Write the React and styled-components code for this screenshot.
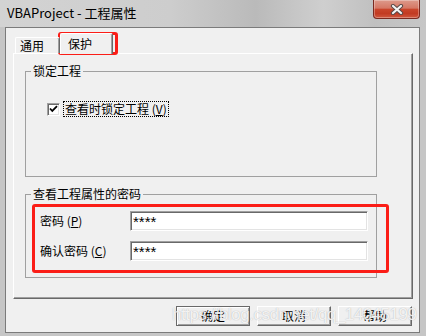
import styled, { createGlobalStyle } from 'styled-components'

const uiFont = `"Noto Sans CJK SC", "Liberation Sans", sans-serif`

const GlobalStyle = createGlobalStyle`
  html, body {
    margin: 0;
    padding: 0;
    background: #f0f0f0;
  }
  body {
    font-family: ${uiFont};
    font-size: 12px;
    color: #000;
  }
`

const Window = styled.div`
  position: relative;
  width: 426px;
  height: 336px;
  display: flex;
  flex-direction: column;
  background: #c6c6c6;
  overflow: hidden;
`

const TitleBar = styled.div`
  flex: none;
  height: 27px;
  display: flex;
  align-items: center;
  padding-left: 7px;
  background: linear-gradient(
    to right,
    #d3d3d3 0%,
    #cdcdcd 40%,
    #bababa 60%,
    #cfcfcf 76%,
    #c0c0c0 88%,
    #c6c6c6 100%
  );
`

const TitleText = styled.span`
  font-size: 13px;
  line-height: 16px;
  padding-bottom: 1px;
`

const CloseButton = styled.div`
  align-self: flex-start;
  margin-left: auto;
  margin-right: 6px;
  box-sizing: border-box;
  width: 47px;
  height: 19px;
  display: flex;
  align-items: center;
  justify-content: center;
  border: 1px solid #7a2a20;
  border-top: none;
  border-radius: 0 0 4px 4px;
  background: linear-gradient(
    #dd9a8b 0%,
    #d57865 45%,
    #c9452b 52%,
    #c23b22 75%,
    #d0593f 100%
  );
  box-shadow: inset 0 0 0 1px rgba(255, 255, 255, 0.3);
`

const Frame = styled.div`
  flex: 1;
  display: flex;
  padding: 0 6px 3px 5px;
  min-height: 0;
`

const Client = styled.div`
  flex: 1;
  display: flex;
  flex-direction: column;
  border: 1px solid #7b7b7b;
  background: #f0f0f0;
  padding: 5px 6px 0 7px;
`

const TabStrip = styled.div`
  position: relative;
  z-index: 1;
  height: 20px;
  display: flex;
  align-items: flex-end;
  padding-left: 2px;
`

const Tab = styled.div`
  box-sizing: border-box;
  width: ${(p) => (p.$active ? 53 : 45)}px;
  height: ${(p) => (p.$active ? 21 : 16)}px;
  margin-bottom: ${(p) => (p.$active ? -1 : 0)}px;
  padding: ${(p) => (p.$active ? '3px 0 0 7px' : '1px 0 0 4px')};
  line-height: 14px;
  background: #f0f0f0;
  border-top: 1px solid #fff;
  border-left: 1px solid #fff;
  border-right: 1px solid #696969;
  box-shadow: inset -1px 0 #a0a0a0;
  border-radius: 2px 2px 0 0;
`

const Panel = styled.div`
  box-sizing: border-box;
  height: 246px;
  display: flex;
  flex-direction: column;
  gap: 10px;
  padding: 10px 0 0 11px;
  border-top: 1px solid #fff;
  border-left: 1px solid #fff;
  border-right: 1px solid #696969;
  border-bottom: 1px solid #696969;
  box-shadow: inset -1px -1px #a0a0a0;
`

const Group = styled.fieldset`
  box-sizing: border-box;
  width: 352px;
  height: ${(p) => p.$height}px;
  margin: 0;
  padding: 0;
  min-width: 0;
  border: 1px solid #a0a0a0;
`

const Legend = styled.legend`
  margin-left: 5px;
  padding: 0 2px;
  line-height: 14px;
  font-size: 12px;
`

const CheckRow = styled.div`
  display: flex;
  align-items: center;
  margin: 23px 0 0 21px;
`

const CheckBox = styled.span`
  box-sizing: border-box;
  flex: none;
  width: 13px;
  height: 13px;
  display: flex;
  align-items: center;
  justify-content: center;
  background: #fff;
  border: 1px solid;
  border-color: #a0a0a0 #fff #fff #a0a0a0;
  box-shadow: inset 1px 1px #696969, inset -1px -1px #e3e3e3;
`

const CheckLabel = styled.span`
  margin-left: 3px;
  padding: 0 1px;
  line-height: 14px;
  border: 1px dotted #000;
`

const Key = styled.span`
  text-decoration: underline;
`

const FieldList = styled.div`
  display: flex;
  flex-direction: column;
  gap: 10px;
  padding: 10px 0 0 14px;
`

const FieldRow = styled.div`
  display: grid;
  grid-template-columns: 90px 238px;
  align-items: center;
`

const FieldLabel = styled.span`
  line-height: 14px;
`

const TextBox = styled.input`
  box-sizing: border-box;
  width: 238px;
  height: 20px;
  margin: 0;
  padding: 0 0 0 2px;
  background: #fff;
  border: 1px solid;
  border-color: #a0a0a0 #fff #fff #a0a0a0;
  box-shadow: inset 1px 1px #696969, inset -1px -1px #e3e3e3;
  font: 15px "Liberation Sans", sans-serif;
  color: #000;
  outline: none;
`

const ButtonRow = styled.div`
  display: flex;
  justify-content: flex-end;
  gap: 7px;
  margin-top: 7px;
  padding-right: 1px;
`

const Button = styled.button`
  box-sizing: border-box;
  width: 74px;
  height: 20px;
  margin: 0;
  padding: 0;
  font: 12px ${uiFont};
  line-height: 14px;
  color: #000;
  background: #f0f0f0;
  border: 1px solid;
  border-color: ${(p) => (p.$default ? '#696969' : '#fff #696969 #696969 #fff')};
  box-shadow: ${(p) =>
    p.$default
      ? 'inset 1px 1px #fff, inset -1px -1px #a0a0a0'
      : 'inset -1px -1px #a0a0a0'};
`

const Highlight = styled.div`
  position: absolute;
  left: ${(p) => p.$x}px;
  top: ${(p) => p.$y}px;
  width: ${(p) => p.$w}px;
  height: ${(p) => p.$h}px;
  box-sizing: border-box;
  border: 3px solid #fb1d17;
  border-radius: 3px;
  pointer-events: none;
`

const Watermark = styled.div`
  position: absolute;
  left: 172px;
  top: 305px;
  font: 17px "Liberation Sans", sans-serif;
  line-height: 20px;
  letter-spacing: -0.5px;
  white-space: nowrap;
  color: rgba(255, 255, 255, 0.85);
  text-shadow: 0 0 1px rgba(110, 110, 110, 0.55);
  pointer-events: none;
`

function CloseIcon() {
  return (
    <svg width="14" height="11" viewBox="0 0 14 11">
      <path d="M3 2 L11 9 M11 2 L3 9" stroke="#5a4a48" strokeWidth="4.2" strokeLinecap="round" />
      <path d="M3 2 L11 9 M11 2 L3 9" stroke="#f4f4f4" strokeWidth="2.2" strokeLinecap="round" />
    </svg>
  )
}

function CheckMark() {
  return (
    <svg width="9" height="8" viewBox="0 0 9 8">
      <polyline points="1,3.5 3.3,6 8,1.2" fill="none" stroke="#000" strokeWidth="1.8" />
    </svg>
  )
}

export default function App() {
  return (
    <>
      <GlobalStyle />
      <Window>
        <TitleBar>
          <TitleText>VBAProject - 工程属性</TitleText>
          <CloseButton>
            <CloseIcon />
          </CloseButton>
        </TitleBar>
        <Frame>
          <Client>
            <TabStrip>
              <Tab>通用</Tab>
              <Tab $active>保护</Tab>
            </TabStrip>
            <Panel>
              <Group $height={113}>
                <Legend>锁定工程</Legend>
                <CheckRow>
                  <CheckBox>
                    <CheckMark />
                  </CheckBox>
                  <CheckLabel>
                    查看时锁定工程 (<Key>V</Key>)
                  </CheckLabel>
                </CheckRow>
              </Group>
              <Group $height={91}>
                <Legend>查看工程属性的密码</Legend>
                <FieldList>
                  <FieldRow>
                    <FieldLabel>
                      密码 (<Key>P</Key>)
                    </FieldLabel>
                    <TextBox readOnly value="****" />
                  </FieldRow>
                  <FieldRow>
                    <FieldLabel>
                      确认密码 (<Key>C</Key>)
                    </FieldLabel>
                    <TextBox readOnly value="****" />
                  </FieldRow>
                </FieldList>
              </Group>
            </Panel>
            <ButtonRow>
              <Button $default>确定</Button>
              <Button>取消</Button>
              <Button>帮助</Button>
            </ButtonRow>
          </Client>
        </Frame>
        <Highlight $x={58} $y={32} $w={60} $h={23} />
        <Highlight $x={32} $y={204} $w={357} $h={69} />
        <Watermark>https://blog.csdn.net/qq_14045199</Watermark>
      </Window>
    </>
  )
}
